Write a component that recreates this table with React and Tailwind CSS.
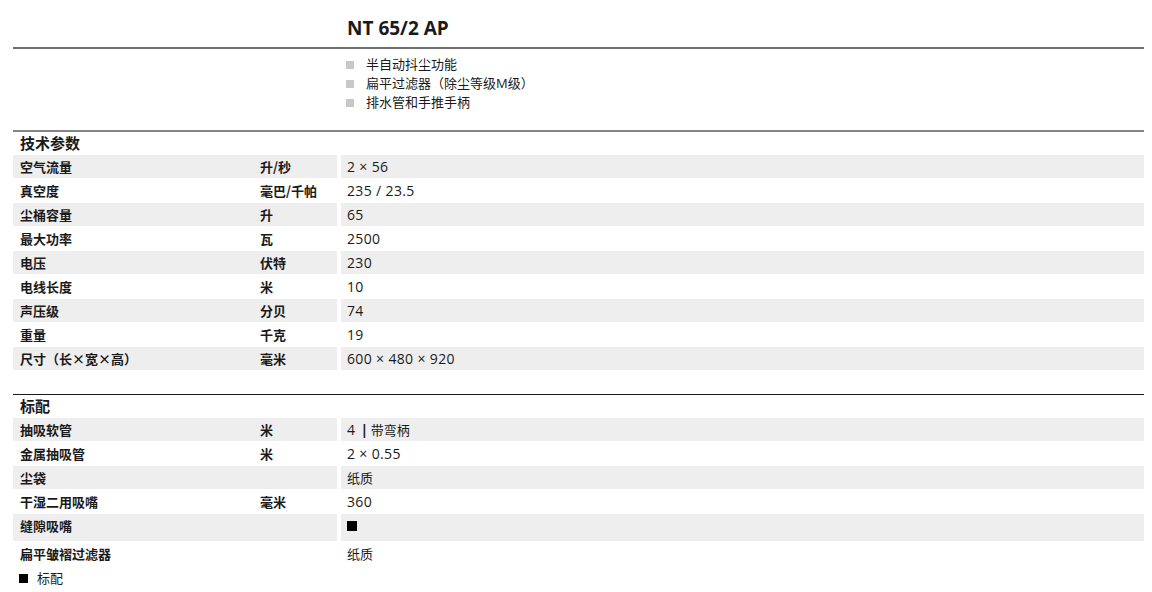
import React from "react";

const tech = [
  ["空气流量", "升/秒", "2 × 56"],
  ["真空度", "毫巴/千帕", "235 / 23.5"],
  ["尘桶容量", "升", "65"],
  ["最大功率", "瓦", "2500"],
  ["电压", "伏特", "230"],
  ["电线长度", "米", "10"],
  ["声压级", "分贝", "74"],
  ["重量", "千克", "19"],
  ["尺寸（长×宽×高）", "毫米", "600 × 480 × 920"],
];

const equip = [
  ["抽吸软管", "米", "4 | 带弯柄"],
  ["金属抽吸管", "米", "2 × 0.55"],
  ["尘袋", "", "纸质"],
  ["干湿二用吸嘴", "毫米", "360"],
  ["缝隙吸嘴", "", "SQUARE", true],
  ["扁平皱褶过滤器", "", "纸质"],
];

function Value({ text }) {
  const parts = text.match(/[\u0000-\u00ff]+|[^\u0000-\u00ff]+/g) || [];
  return (
    <div className="leading-[17px] whitespace-pre">
      {parts.map((p, i) =>
        /^[\u0000-\u00ff]+$/.test(p) ? (
          p.includes("|") ? (
            <span key={i} className="text-[14px] tracking-[-0.6px]">
              {p.replace(" |", " ")}
              <span className="font-bold">|</span>
              {" "}
            </span>
          ) : (
            <span key={i} className="text-[14px] tracking-[0.35px]">{p}</span>
          )
        ) : (
          <span key={i} className="text-[13px]">{p}</span>
        )
      )}
    </div>
  );
}

function Row({ label, unit, value, grey, tall }) {
  const bg = grey ? "bg-[#eeeeee]" : "bg-white";
  return (
    <div className={tall ? "flex h-[28px]" : "flex h-[24px]"}>
      <div
        className={`${bg} w-[324px] flex pl-[7px] ${tall ? "h-[27px] items-start pt-[3px]" : "h-[23px] items-center"}`}
        style={{ fontFamily: "'Noto Sans CJK SC', 'Open Sans', sans-serif" }}
      >
        <div className="w-[240px] font-bold text-[13px] leading-[17px]">{label}</div>
        <div className="font-bold text-[13px] leading-[17px]">{unit}</div>
      </div>
      <div
        className={`${bg} ml-[4px] flex-1 flex pl-[6px] ${tall ? "h-[27px] items-start pt-[3px]" : "h-[23px] items-center"}`}
      >
        {value === "SQUARE" ? (
          <span className="block w-[10px] h-[10px] bg-black mt-[4px]" />
        ) : (
          <Value text={value} />
        )}
      </div>
    </div>
  );
}

export default function App() {
  return (
    <div
      className="w-[1152px] h-[592px] bg-white pl-[13px] pr-[8px] text-[#1a1a1a] overflow-hidden"
      style={{ fontFamily: "'Open Sans', 'Noto Sans CJK SC', sans-serif" }}
    >
      <div className="flex h-[47px]">
        <div className="w-[328px]" />
        <div className="pl-[6px] pt-[15px] text-[19px] font-bold leading-[26px]">NT 65/2 AP</div>
      </div>
      <div className="h-[2px] bg-[#707070]" />
      <div className="flex pt-[6px] pb-[18px]">
        <div className="w-[328px]" />
        <div className="pl-[5px] flex flex-col">
          {["半自动抖尘功能", "扁平过滤器（除尘等级M级）", "排水管和手推手柄"].map((t) => (
            <div key={t} className="flex items-center h-[19px]">
              <span className="block w-[8px] h-[8px] bg-[#c8c8c8] mr-[12px]" />
              <span className="text-[13px] leading-[19px]">{t}</span>
            </div>
          ))}
        </div>
      </div>
      <div className="h-[2px] bg-[#858585]" />
      <div className="h-[23px] pl-[7px] text-[15px] font-bold leading-[23px]">技术参数</div>
      {tech.map((r, i) => (
        <Row key={r[0]} label={r[0]} unit={r[1]} value={r[2]} grey={i % 2 === 0} />
      ))}
      <div className="h-[23px]" />
      <div className="h-px bg-[#1a1a1a]" />
      <div className="h-[23px] pl-[7px] text-[15px] font-bold leading-[23px]">标配</div>
      {equip.map((r, i) => (
        <Row key={r[0]} label={r[0]} unit={r[1]} value={r[2]} tall={r[3]} grey={i % 2 === 0} />
      ))}
      <div className="flex items-center h-[24px] pl-[6px]">
        <span className="block w-[9px] h-[9px] bg-black mr-[9px]" />
        <span className="text-[13px] leading-[17px]">标配</span>
      </div>
    </div>
  );
}
